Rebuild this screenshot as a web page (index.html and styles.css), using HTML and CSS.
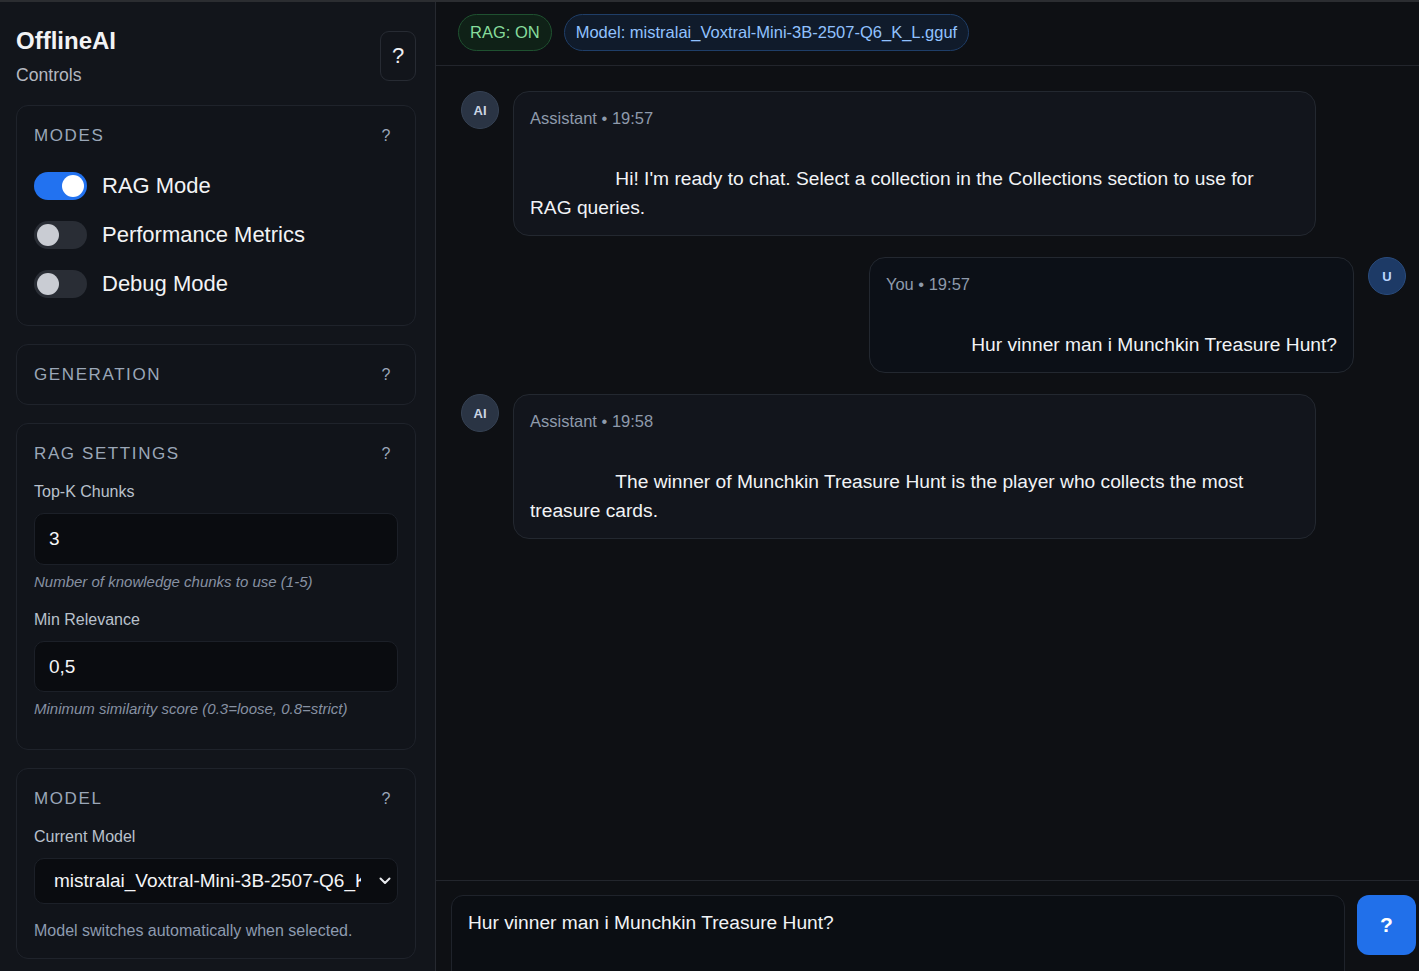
FILE: index.html
```html
<!DOCTYPE html>
<html lang="en">

<head>
    <meta charset="utf-8">
    <title>OfflineAI</title>
    <link rel="stylesheet" href="styles.css">
</head>

<body>
    <div class="app">
        <aside class="sidebar">
            <div class="side-head">
                <div>
                    <h1 class="brand">OfflineAI</h1>
                    <div class="brand-sub">Controls</div>
                </div>
                <button class="help-btn">?</button>
            </div>

            <section class="card">
                <div class="card-head">
                    <h2>Modes</h2>
                    <span class="card-help">?</span>
                </div>
                <div class="toggles">
                    <label class="toggle-row"><span class="switch on"><i></i></span>RAG Mode</label>
                    <label class="toggle-row"><span class="switch"><i></i></span>Performance Metrics</label>
                    <label class="toggle-row"><span class="switch"><i></i></span>Debug Mode</label>
                </div>
            </section>

            <section class="card">
                <div class="card-head">
                    <h2>Generation</h2>
                    <span class="card-help">?</span>
                </div>
            </section>

            <section class="card">
                <div class="card-head">
                    <h2>RAG Settings</h2>
                    <span class="card-help">?</span>
                </div>
                <div class="field">
                    <div class="field-label">Top-K Chunks</div>
                    <div class="input">3</div>
                    <div class="field-hint">Number of knowledge chunks to use (1-5)</div>
                </div>
                <div class="field">
                    <div class="field-label">Min Relevance</div>
                    <div class="input">0,5</div>
                    <div class="field-hint">Minimum similarity score (0.3=loose, 0.8=strict)</div>
                </div>
            </section>

            <section class="card">
                <div class="card-head">
                    <h2>Model</h2>
                    <span class="card-help">?</span>
                </div>
                <div class="field-label">Current Model</div>
                <div class="select">
                    <span class="select-text">mistralai_Voxtral-Mini-3B-2507-Q6_K_L.gguf</span>
                    <svg width="12" height="8" viewBox="0 0 12 8"><path d="M1.5 1.5 L6 6 L10.5 1.5" fill="none" stroke="#e8eaee" stroke-width="2" stroke-linecap="round" stroke-linejoin="round"/></svg>
                </div>
                <div class="model-note">Model switches automatically when selected.</div>
            </section>
        </aside>

        <main class="chat">
            <div class="topbar">
                <span class="badge badge-rag">RAG: ON</span>
                <span class="badge badge-model">Model: mistralai_Voxtral-Mini-3B-2507-Q6_K_L.gguf</span>
            </div>

            <div class="messages">
                <div class="msg">
                    <div class="avatar">AI</div>
                    <div class="bubble">
                        <div class="meta">Assistant • 19:57</div>
                        <div class="msg-text">
                Hi! I'm ready to chat. Select a collection in the Collections section to use for RAG queries.</div>
                    </div>
                </div>
                <div class="msg mine">
                    <div class="bubble">
                        <div class="meta">You • 19:57</div>
                        <div class="msg-text">
                Hur vinner man i Munchkin Treasure Hunt?</div>
                    </div>
                    <div class="avatar avatar-user">U</div>
                </div>
                <div class="msg">
                    <div class="avatar">AI</div>
                    <div class="bubble">
                        <div class="meta">Assistant • 19:58</div>
                        <div class="msg-text">
                The winner of Munchkin Treasure Hunt is the player who collects the most treasure cards.</div>
                    </div>
                </div>
            </div>

            <div class="composer">
                <textarea class="prompt">Hur vinner man i Munchkin Treasure Hunt?</textarea>
                <button class="send">?</button>
            </div>
        </main>
    </div>
</body>

</html>
```

FILE: styles.css
```css
* {
    margin: 0;
    padding: 0;
    box-sizing: border-box;
}

html,
body {
    height: 100%;
    overflow: hidden;
}

body {
    background: #0e1014;
    color: #eef0f3;
    font-family: "Liberation Sans", Arial, sans-serif;
}

.app {
    display: flex;
    height: 100vh;
    border-top: 2px solid #2b2d31;
}

/* sidebar */

.sidebar {
    width: 436px;
    flex-shrink: 0;
    background: #12151b;
    border-right: 1px solid #262930;
    padding: 24px 19px 16px 16px;
    overflow: hidden;
}

.side-head {
    display: flex;
    justify-content: space-between;
    align-items: center;
    margin-bottom: 19px;
}

.brand {
    font-size: 24px;
    line-height: 29px;
    font-weight: bold;
    color: #f2f3f5;
}

.brand-sub {
    font-size: 17.6px;
    line-height: 21px;
    color: #b4b8c0;
    margin-top: 10px;
}

.help-btn {
    width: 36px;
    height: 50px;
    border-radius: 9px;
    border: 1px solid #272b33;
    background: #12151b;
    color: #eef0f3;
    font-family: inherit;
    font-size: 22px;
    cursor: pointer;
}

.card {
    background: #11141a;
    border: 1px solid #1f232b;
    border-radius: 12px;
    padding: 19px 17px 18px 17px;
    margin-bottom: 18px;
}

.card-head {
    display: flex;
    justify-content: space-between;
    align-items: center;
    height: 22px;
}

.card-head h2 {
    font-size: 17px;
    font-weight: normal;
    text-transform: uppercase;
    letter-spacing: 1.6px;
    color: #9ba7b8;
}

.card-help {
    width: 24px;
    text-align: center;
    font-size: 16px;
    color: #9ba7b8;
}

.toggles {
    display: flex;
    flex-direction: column;
    gap: 21px;
    margin-top: 25px;
    padding-bottom: 9px;
}

.toggle-row {
    display: flex;
    align-items: center;
    gap: 15px;
    font-size: 22px;
    color: #f2f3f5;
}

.switch {
    width: 53px;
    height: 28px;
    border-radius: 14px;
    background: #292d35;
    position: relative;
}

.switch i {
    position: absolute;
    top: 3px;
    left: 3px;
    width: 22px;
    height: 22px;
    border-radius: 50%;
    background: #c9ccd3;
}

.switch.on {
    background: #2272f0;
}

.switch.on i {
    left: 28px;
    background: #fff;
}

.field {
    margin-top: 17px;
}

.field + .field {
    margin-top: 20px;
}

.field:last-child {
    margin-bottom: 14px;
}

.field-label {
    font-size: 16px;
    line-height: 19px;
    color: #b9c1cc;
    margin-bottom: 12px;
}

.card-head + .field-label {
    margin-top: 17px;
}

.input {
    height: 52px;
    background: #0a0c10;
    border: 1px solid #1c2028;
    border-radius: 10px;
    padding: 0 14px;
    display: flex;
    align-items: center;
    font-size: 19px;
    color: #f4f5f7;
}

.field + .field .input {
    height: 51px;
}

.field-hint {
    margin-top: 8px;
    font-size: 15px;
    line-height: 17px;
    font-style: italic;
    color: #8791a2;
}

.select {
    height: 46px;
    background: #0a0c10;
    border: 1px solid #1c2028;
    border-radius: 10px;
    padding: 0 6px 0 19px;
    display: flex;
    align-items: center;
    gap: 18px;
}

.select-text {
    flex: 1;
    overflow: hidden;
    white-space: nowrap;
    font-size: 19px;
    color: #f4f5f7;
}

.model-note {
    margin-top: 17px;
    font-size: 16px;
    line-height: 19px;
    color: #8d9bb0;
}

/* chat */

.chat {
    flex: 1;
    display: flex;
    flex-direction: column;
    min-width: 0;
}

.topbar {
    display: flex;
    gap: 12px;
    padding: 12px 22px 14px 22px;
    border-bottom: 1px solid #22252c;
}

.badge {
    height: 37px;
    display: flex;
    align-items: center;
    padding: 0 11px;
    border-radius: 19px;
    font-size: 16.5px;
}

.badge-rag {
    background: #0f2117;
    border: 1px solid #1f5130;
    color: #86dc9c;
}

.badge-model {
    background: #101b2b;
    border: 1px solid #1f3e68;
    color: #90c2ff;
}

.messages {
    flex: 1;
    padding: 25px 13px 20px 25px;
    display: flex;
    flex-direction: column;
    gap: 21px;
    overflow: hidden;
}

.msg {
    display: flex;
    align-items: flex-start;
    gap: 14px;
}

.msg.mine {
    justify-content: flex-end;
}

.avatar {
    width: 38px;
    height: 38px;
    flex-shrink: 0;
    border-radius: 50%;
    background: #2a3444;
    border: 1px solid #364254;
    display: flex;
    align-items: center;
    justify-content: center;
    font-size: 13px;
    font-weight: bold;
    color: #cbd5e3;
}

.avatar-user {
    background: #1d3a66;
    border-color: #2a4c7e;
    color: #bcd6ff;
}

.bubble {
    max-width: 85%;
    background: #12151c;
    border: 1px solid #232830;
    border-radius: 16px;
    padding: 15px 16px 13px 16px;
}

.mine .bubble {
    background: #0c1017;
}

.meta {
    font-size: 16.5px;
    line-height: 22px;
    color: #8e9aab;
    margin-bottom: 6px;
}

.msg-text {
    white-space: pre-wrap;
    font-size: 19.2px;
    line-height: 29px;
    color: #f1f3f6;
}

.composer {
    height: 91px;
    flex-shrink: 0;
    border-top: 1px solid #23262d;
    padding: 14px 3px 0 15px;
    display: flex;
    align-items: flex-start;
    gap: 12px;
    overflow: hidden;
}

.prompt {
    flex: 1;
    height: 100px;
    resize: none;
    overflow: hidden;
    background: #0b0e13;
    border: 1px solid #1f232b;
    border-radius: 12px;
    padding: 16px 16px;
    font-family: inherit;
    font-size: 19.2px;
    line-height: 22px;
    color: #f1f3f6;
}

.send {
    width: 59px;
    height: 60px;
    border: none;
    border-radius: 12px;
    background: #2170ea;
    color: #fff;
    font-family: inherit;
    font-size: 21px;
    font-weight: bold;
    cursor: pointer;
}
```
